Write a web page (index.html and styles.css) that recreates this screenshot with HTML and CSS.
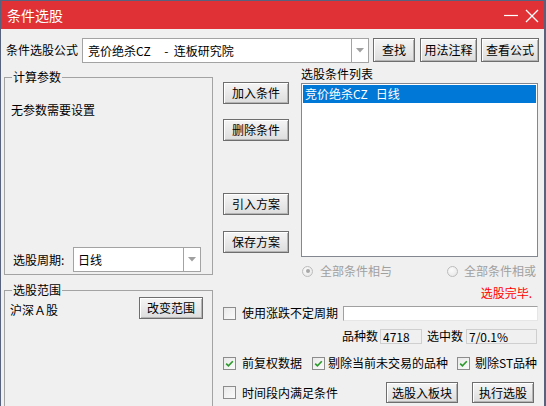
FILE: index.html
```html
<!DOCTYPE html>
<html lang="zh-CN">
<head>
<meta charset="utf-8">
<title>条件选股</title>
<link rel="stylesheet" href="styles.css">
</head>
<body>
<div class="window">
  <div class="titlebar">
    <span class="title">条件选股</span>
    <svg class="controls" width="40" height="28" viewBox="0 0 40 28">
      <line x1="3" y1="14.5" x2="17" y2="14.5" stroke="#fff" stroke-width="1.2"/>
      <line x1="25" y1="9" x2="37" y2="21" stroke="#fff" stroke-width="1.3"/>
      <line x1="37" y1="9" x2="25" y2="21" stroke="#fff" stroke-width="1.3"/>
    </svg>
  </div>

  <div class="formula-row">
    <span class="formula-label">条件选股公式</span>
    <div class="combo combo-formula">
      <span class="combo-text">竞价绝杀CZ     -  连板研究院</span>
      <span class="combo-arrow"><svg width="8" height="5" viewBox="0 0 8 5"><path d="M0 0H8L4 4.5Z" fill="#a0a0a0"/></svg></span>
    </div>
    <button class="btn btn-find">查找</button>
    <button class="btn btn-usage">用法注释</button>
    <button class="btn btn-view">查看公式</button>
  </div>

  <div class="main">
    <div class="left-col">
      <fieldset class="group params">
        <legend>计算参数</legend>
        <p class="no-params">无参数需要设置</p>
        <div class="period-row">
          <span class="period-label">选股周期:</span>
          <div class="combo combo-period">
            <span class="combo-text">日线</span>
            <span class="combo-arrow"><svg width="8" height="5" viewBox="0 0 8 5"><path d="M0 0H8L4 4.5Z" fill="#a0a0a0"/></svg></span>
          </div>
        </div>
      </fieldset>
      <fieldset class="group range">
        <legend>选股范围</legend>
        <div class="range-row">
          <span>沪深Ａ股</span>
          <button class="btn btn-range">改变范围</button>
        </div>
      </fieldset>
    </div>

    <div class="right-col">
      <div class="cond-area">
        <div class="btn-col">
          <button class="btn btn-side">加入条件</button>
          <button class="btn btn-side btn-del">删除条件</button>
          <button class="btn btn-side btn-import">引入方案</button>
          <button class="btn btn-side btn-save">保存方案</button>
        </div>
        <div class="list-col">
          <div class="list-label">选股条件列表</div>
          <div class="listbox">
            <div class="list-item selected">竞价绝杀CZ   日线</div>
          </div>
          <div class="radio-row">
            <span class="radio-item"><span class="radio"><span class="dot"></span></span><span class="radio-text">全部条件相与</span></span>
            <span class="radio-item"><span class="radio"></span><span class="radio-text rt2">全部条件相或</span></span>
          </div>
        </div>
      </div>

      <div class="status">选股完毕.</div>

      <div class="row zdbd-row">
        <span class="check-item"><span class="cb"></span><span class="cb-text">使用涨跌不定周期</span></span>
        <span class="text-input"></span>
      </div>

      <div class="row count-row">
        <span>品种数</span>
        <span class="ro-box box-total">4718</span>
        <span class="count-label2">选中数</span>
        <span class="ro-box box-selected">7/0.1%</span>
      </div>

      <div class="row opts-row">
        <span class="check-item"><span class="cb"><svg width="11" height="11" viewBox="0 0 11 11"><polyline points="2.2,5.6 4.4,7.8 8.8,3.2" fill="none" stroke="#2a9a2a" stroke-width="1.6"/></svg></span><span class="cb-text">前复权数据</span></span>
        <span class="check-item"><span class="cb"><svg width="11" height="11" viewBox="0 0 11 11"><polyline points="2.2,5.6 4.4,7.8 8.8,3.2" fill="none" stroke="#2a9a2a" stroke-width="1.6"/></svg></span><span class="cb-text cb-tight">剔除当前未交易的品种</span></span>
        <span class="check-item"><span class="cb"><svg width="11" height="11" viewBox="0 0 11 11"><polyline points="2.2,5.6 4.4,7.8 8.8,3.2" fill="none" stroke="#2a9a2a" stroke-width="1.6"/></svg></span><span class="cb-text cb-mid">剔除ST品种</span></span>
      </div>

      <div class="row last-row">
        <span class="check-item"><span class="cb"></span><span class="cb-text">时间段内满足条件</span></span>
        <span class="spacer"></span>
        <button class="btn btn-block">选股入板块</button>
        <button class="btn btn-run">执行选股</button>
      </div>
    </div>
  </div>
</div>
</body>
</html>
```

FILE: styles.css
```css
* { box-sizing: border-box; }

body {
  margin: 0;
  font-family: "Noto Sans CJK SC", "Microsoft YaHei", sans-serif;
  font-size: 12px;
  line-height: 16px;
  color: #000;
}

.window {
  width: 546px;
  height: 406px;
  overflow: hidden;
  background: #f0f0f0;
  border: 1px solid #57627e;
  border-right-width: 2px;
  border-bottom: none;
}

.titlebar {
  height: 28px;
  background: #e03236;
  color: #fff;
  display: flex;
  align-items: center;
  padding: 0 3px 0 6px;
  font-size: 14px;
  line-height: 20px;
}
.title { flex: 1; }
.controls { display: block; }

/* buttons */
.btn {
  font-family: inherit;
  font-size: 12px;
  color: #000;
  padding: 0;
  margin: 0;
  height: 22px;
  line-height: 18px;
  text-align: center;
  border: 1px solid #6e6e6e;
  background: linear-gradient(#f5f5f5, #dddddd);
  box-shadow: inset 1px 1px 0 #ffffff, inset -1px -1px 0 #b4b4b4;
  border-radius: 0;
}

/* formula row */
.formula-row {
  display: flex;
  align-items: center;
  height: 24px;
  margin-top: 9px;
  padding-left: 5px;
}
.formula-label { width: 76px; }
.btn-find { width: 42px; height: 24px; margin-left: 4px; }
.btn-usage { width: 57px; height: 24px; margin-left: 5px; }
.btn-view { width: 58px; height: 24px; margin-left: 4px; }

.combo {
  display: flex;
  background: #fff;
  border: 1px solid #a3a3a3;
}
.combo-formula { width: 287px; height: 25px; }
.combo-period { width: 128px; height: 25px; }
.combo-text {
  flex: 1;
  white-space: pre;
  line-height: 23px;
  padding-left: 5px;
}
.combo-period .combo-text { padding-left: 4px; }
.combo-arrow {
  width: 17px;
  border-left: 1px solid #a3a3a3;
  display: flex;
  align-items: center;
  justify-content: center;
}

/* main */
.main {
  display: flex;
  padding-left: 3px;
  gap: 10px;
}
.left-col { width: 209px; }

.group {
  margin: 0;
  border: 1px solid #a3a3a3;
  min-inline-size: 0;
}
.group legend {
  padding: 0 1px;
  line-height: 14px;
  font-size: 12px;
}

.params {
  margin-top: 8px;
  height: 205px;
  padding: 0 0 2px 6px;
  display: flex;
  flex-direction: column;
}
.params legend { margin-left: 1px; }
.no-params { margin: 18px 0 0; }
.period-row {
  margin-top: auto;
  display: flex;
  align-items: center;
  padding-left: 2px;
}
.period-label { width: 60px; }

.range {
  margin-top: 8px;
  height: 140px;
  padding: 0 9px 0 5px;
}
.range legend { margin-left: 2px; }
.range-row {
  display: flex;
  justify-content: space-between;
  align-items: center;
  height: 22px;
}
.range-row span { position: relative; top: 2px; }
.btn-range { width: 64px; }

/* right column */
.right-col { width: 315px; }
.cond-area { display: flex; }
.btn-col {
  width: 66px;
  display: flex;
  flex-direction: column;
  padding-top: 20px;
}
.btn-side { width: 66px; }
.btn-del { margin-top: 15px; }
.btn-import { margin-top: 52px; }
.btn-save { margin-top: 16px; }

.list-col {
  width: 237px;
  margin-left: 12px;
  padding-top: 4px;
}
.list-label { height: 16px; }
.listbox {
  margin-top: 1px;
  height: 174px;
  background: #fff;
  border: 1px solid #828790;
  padding: 1px;
}
.list-item {
  height: 18px;
  line-height: 18px;
  padding-left: 2px;
  white-space: pre;
}
.list-item.selected { background: #0078d7; color: #fff; }

.radio-row {
  margin-top: 6px;
  height: 16px;
  display: flex;
  justify-content: space-between;
  align-items: center;
  padding: 0 2px 0 1px;
}
.radio-item { display: flex; align-items: center; }
.radio {
  width: 11px;
  height: 11px;
  border-radius: 50%;
  border: 1px solid #bcbcbc;
  background: radial-gradient(circle at 40% 35%, #fbfbfb, #e4e4e4);
  display: flex;
  align-items: center;
  justify-content: center;
}
.dot {
  width: 4px;
  height: 4px;
  border-radius: 50%;
  background: #a8a8a8;
}
.radio-text { color: #a0a0a0; margin-left: 7px; }
.rt2 { margin-left: 6px; }

.status {
  margin-top: 6px;
  height: 16px;
  text-align: right;
  padding-right: 6px;
  color: #ff0000;
}

.row {
  display: flex;
  align-items: center;
}
.zdbd-row { margin-top: 4px; height: 16px; justify-content: space-between; }
.count-row { margin-top: 7px; height: 16px; justify-content: flex-end; padding-right: 1px; }
.opts-row {
  margin-top: 11px;
  height: 16px;
  display: grid;
  grid-template-columns: 89px 145px 1fr;
  align-items: center;
}
.last-row { margin-top: 11px; height: 21px; }

.check-item { display: flex; align-items: center; }
.cb {
  width: 13px;
  height: 13px;
  border: 1px solid #8c8c8c;
  background: linear-gradient(135deg, #e9e9e9, #fafafa);
  display: flex;
  align-items: center;
  justify-content: center;
}
.cb-text { margin-left: 6px; }
.cb-tight { margin-left: 3px; }
.cb-mid { margin-left: 5px; }

.text-input {
  width: 195px;
  height: 15px;
  background: #fff;
  border-top: 1px solid #a0a0a0;
  border-left: 1px solid #a0a0a0;
  border-right: 1px solid #e6e6e6;
  border-bottom: 1px solid #e6e6e6;
}

.ro-box {
  height: 15px;
  line-height: 13px;
  border: 1px solid #cfcfcf;
  padding-left: 2px;
}
.box-total { width: 42px; margin-left: 2px; }
.count-label2 { margin-left: 5px; }
.box-selected { width: 71px; margin-left: 3px; }

.spacer { flex: 1; }
.btn-block { width: 72px; height: 21px; }
.btn-run { width: 62px; height: 21px; margin-left: 14px; margin-right: 4px; }
```
